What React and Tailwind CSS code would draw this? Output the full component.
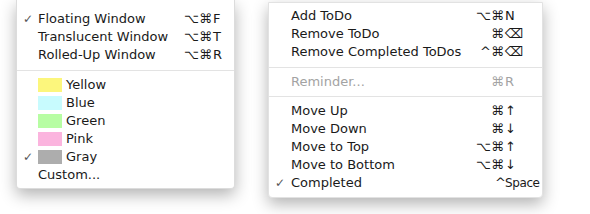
import React from 'react';

const font = { fontFamily: '"DejaVu Sans", "Liberation Sans", sans-serif' };

function Row({ label, mods = '', keyChar = '', keyClass = '', checked, disabled, swatch, keyWidth, indent }) {
    return (
        <div className={`flex items-center h-[18px] ${disabled ? 'text-[#a3a3a3]' : 'text-[#1a1a1a]'}`}>
            <div className={`${indent} shrink-0 text-[12px] text-[#555] pl-[6px]`}>{checked ? '✓' : ''}</div>
            {swatch && <div className={`w-[24px] h-[14px] mr-[4px] ${swatch}`} />}
            <div className="flex-1 whitespace-nowrap">{label}</div>
            <div className="whitespace-nowrap text-right">{mods}</div>
            <div className={`${keyWidth} whitespace-nowrap ${keyClass}`}>{keyChar}</div>
        </div>
    );
}

function Separator({ h }) {
    return (
        <div className={`${h} flex items-center`}>
            <div className="w-full h-px bg-[#e3e3e3]" />
        </div>
    );
}

export default function App() {
    const left = { indent: 'w-[21px]', keyWidth: 'w-[22px] pl-px' };
    const right = { indent: 'w-[22px]', keyWidth: 'w-[38px] pl-px' };

    return (
        <div className="w-[590px] h-[214px] bg-white flex items-start text-[13px] leading-[18px]" style={font}>
            <div className="ml-[16px] w-[219px] bg-white pt-[10px] pb-[4px] rounded-b-[4px] border-x border-b border-[#dcdcdc] shadow-[0_6px_16px_rgba(0,0,0,0.3)]">
                <Row {...left} label="Floating Window" mods="⌥⌘" keyChar="F" checked />
                <Row {...left} label="Translucent Window" mods="⌥⌘" keyChar="T" />
                <Row {...left} label="Rolled-Up Window" mods="⌥⌘" keyChar="R" />
                <Separator h="h-[12px]" />
                <Row {...left} label="Yellow" swatch="bg-[#fcf67c]" />
                <Row {...left} label="Blue" swatch="bg-[#c8fbfe]" />
                <Row {...left} label="Green" swatch="bg-[#b7fda3]" />
                <Row {...left} label="Pink" swatch="bg-[#fbb4de]" />
                <Row {...left} label="Gray" swatch="bg-[#adadad]" checked />
                <Row {...left} label="Custom..." />
            </div>

            <div className="ml-[33px] mt-[2px] w-[275px] bg-white pt-[4px] pb-[5px] rounded-b-[4px] border border-[#e2e2e2] shadow-[0_6px_16px_rgba(0,0,0,0.3)]">
                <Row {...right} label="Add ToDo" mods="⌥⌘" keyChar="N" />
                <Row {...right} label="Remove ToDo" mods="⌘" keyChar="⌫" />
                <Row {...right} label="Remove Completed ToDos" mods="^⌘" keyChar="⌫" />
                <Separator h="h-[12px]" />
                <Row {...right} label="Reminder..." mods="⌘" keyChar="R" disabled />
                <Separator h="h-[11px]" />
                <Row {...right} label="Move Up" mods="⌘" keyChar="↑" />
                <Row {...right} label="Move Down" mods="⌘" keyChar="↓" />
                <Row {...right} label="Move to Top" mods="⌥⌘" keyChar="↑" />
                <Row {...right} label="Move to Bottom" mods="⌥⌘" keyChar="↓" />
                <Row {...right} label="Completed" mods="^" keyChar="Space" keyClass="text-[12px] tracking-[-0.4px] -ml-[2px]" checked />
            </div>
        </div>
    );
}
